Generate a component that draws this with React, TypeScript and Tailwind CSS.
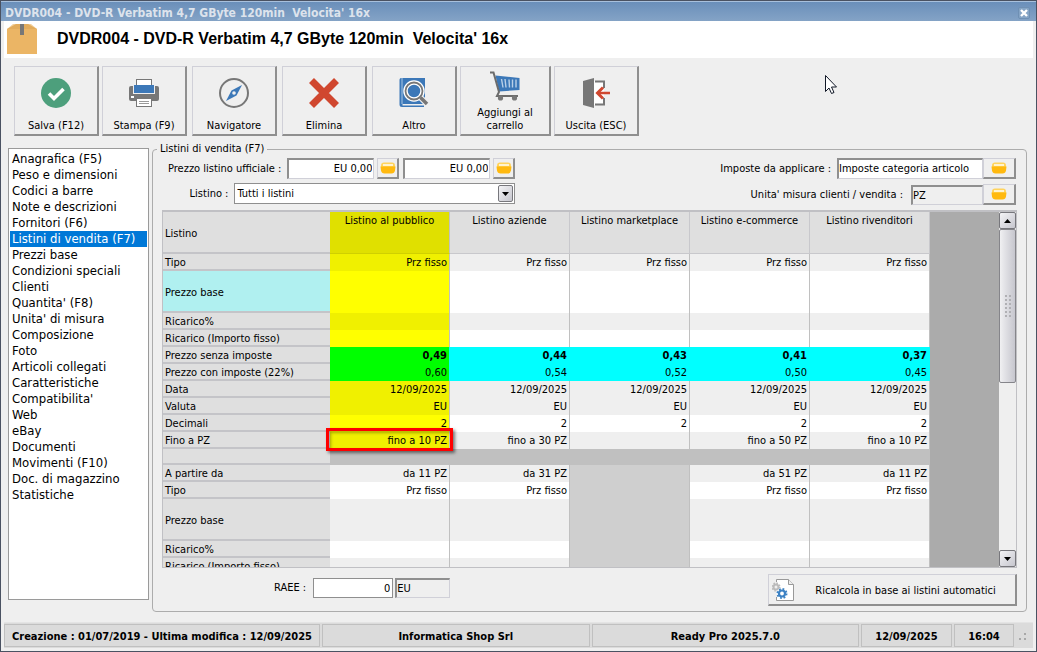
import type { ReactNode } from 'react';
import { clsx } from 'clsx';

const PRODUCT = "DVDR004 - DVD-R Verbatim 4,7 GByte 120min\u00a0 Velocita' 16x";

const SECTIONS = [
  'Anagrafica (F5)',
  'Peso e dimensioni',
  'Codici a barre',
  'Note e descrizioni',
  'Fornitori (F6)',
  'Listini di vendita (F7)',
  'Prezzi base',
  'Condizioni speciali',
  'Clienti',
  "Quantita' (F8)",
  "Unita' di misura",
  'Composizione',
  'Foto',
  'Articoli collegati',
  'Caratteristiche',
  "Compatibilita'",
  'Web',
  'eBay',
  'Documenti',
  'Movimenti (F10)',
  'Doc. di magazzino',
  'Statistiche',
];

const RAISED =
  'border border-t-[#d0d0d8] border-l-[#d0d0d8] border-r-2 border-b-2 border-r-[#8f8f8f] border-b-[#8f8f8f] bg-[#efefef]';
const SUNKEN =
  'border-t-2 border-l-2 border-r border-b border-t-[#8f8f8f] border-l-[#8f8f8f] border-r-[#d0d0d8] border-b-[#d0d0d8]';

function BoxIcon() {
  return (
    <svg width="30" height="30" viewBox="0 0 30 30">
      <path d="M6 0h18l6 5H0z" fill="#f2cf9b" />
      <path d="M9 0h12l9 5H0z" fill="#e2ac5c" />
      <rect y="5" width="30" height="25" fill="#ebb565" />
      <path d="M13 0h4v11h-4z" fill="#777" />
    </svg>
  );
}

function SaveIcon() {
  return (
    <svg width="30" height="30" viewBox="0 0 30 30">
      <circle cx="15" cy="15" r="15" fill="#4d9f7c" />
      <path d="M8 15.500l5 5L22.500 11" fill="none" stroke="#fff" strokeWidth="3.600" />
    </svg>
  );
}

function PrintIcon() {
  return (
    <svg width="30" height="30" viewBox="0 0 30 30">
      <rect x="7.500" y="1.500" width="15" height="9" fill="#fff" stroke="#777" />
      <path d="M2 8h26a2 2 0 0 1 2 2v11a2 2 0 0 1-2 2H2a2 2 0 0 1-2-2V10a2 2 0 0 1 2-2z" fill="#777" />
      <path d="M4 6h22v10H4z" fill="#efefef" />
      <rect x="7.500" y="1.500" width="15" height="9" fill="#fff" stroke="#777" />
      <rect x="5" y="7" width="20" height="8" fill="#3c78b8" />
      <rect x="2" y="18" width="3" height="2" fill="#fff" />
      <rect x="7.500" y="20.500" width="15" height="8" fill="#fff" stroke="#777" />
      <path d="M10 23.500h10M10 25.500h10" stroke="#999" />
    </svg>
  );
}

function CompassIcon() {
  return (
    <svg width="30" height="30" viewBox="0 0 30 30">
      <circle cx="15" cy="15" r="14" fill="none" stroke="#777" strokeWidth="2" />
      <path d="M23 7l-5.500 10.500L7 23l5.500-10.500z" fill="#3c78b8" />
      <circle cx="15" cy="15" r="1.800" fill="#efefef" />
    </svg>
  );
}

function DeleteIcon() {
  return (
    <svg width="30" height="30" viewBox="0 0 30 30">
      <path d="M2.500 2.500l25 25M27.500 2.500l-25 25" stroke="#d0472f" strokeWidth="7" />
    </svg>
  );
}

function SearchBookIcon() {
  return (
    <svg width="30" height="30" viewBox="0 0 30 30">
      <path d="M3 0h23v26H3.500v1.500H25V29H3a2.500 2.500 0 0 1-2.500-2.500V2A2 2 0 0 1 3 0z" fill="#3c78b8" />
      <path d="M3 0v26" stroke="#a9c7e5" />
      <path d="M21 19l7 7" stroke="#efefef" strokeWidth="6" />
      <circle cx="15" cy="13" r="8.500" fill="#3c78b8" stroke="#fff" strokeWidth="4.500" />
      <circle cx="15" cy="13" r="8.500" fill="none" stroke="#777" strokeWidth="1.800" />
      <path d="M21.500 19.500l6.500 6.500" stroke="#777" strokeWidth="3.600" />
    </svg>
  );
}

function CartIcon() {
  return (
    <svg width="30" height="30" viewBox="0 0 30 30">
      <path d="M5.500 4.500L29.500 7v12L9 20.500z" fill="#3c78b8" />
      <path d="M11.500 8l1.500 8.500M15 8l1 8.500M19 8.500l.5 8M22.500 8.500v8M26 8.500v8" stroke="#b9d0e8" strokeWidth="1.400" />
      <path d="M0 1.500h3.500L9 21 7 25h21" fill="none" stroke="#6c6c6c" strokeWidth="2" />
      <circle cx="10.500" cy="27" r="2.600" fill="#777" />
      <circle cx="24.500" cy="27" r="2.600" fill="#777" />
    </svg>
  );
}

function ExitIcon() {
  return (
    <svg width="30" height="30" viewBox="0 0 30 30">
      <path d="M2 3l11-3v30L2 27z" fill="#777" />
      <path d="M13 3h10v24H13z" fill="#fff" />
      <path d="M14 3.500h9V10M14 26.500h9V20" fill="none" stroke="#777" strokeWidth="2" />
      <path d="M29 15H17" stroke="#d0472f" strokeWidth="2.500" />
      <path d="M22 9.500L16.500 15l5.500 5.500" fill="none" stroke="#d0472f" strokeWidth="3" />
    </svg>
  );
}

function FolderIcon() {
  return (
    <svg width="16" height="12" viewBox="0 0 16 12">
      <path d="M1 3.500Q1 .5 4 .5h8q3 0 3 3V6H1z" fill="#ffd45e" />
      <path d="M3 2h10v2H3z" fill="#fff3cf" />
      <path d="M.5 4.500H15.500L15 8.500q-.5 3-3.500 3h-7q-3 0-3.500-3z" fill="#ffb90f" />
    </svg>
  );
}

function RecalcIcon() {
  return (
    <svg width="24" height="24" viewBox="0 0 24 24">
      <path d="M4.500 1.500h12l5 5v16h-17z" fill="#fff" stroke="#999" />
      <path d="M16.500 1.500v5h5" fill="#eee" stroke="#999" />
      <path d="M3 4h3v15H3z" fill="#efefef" />
      <circle cx="4" cy="9" r="2.500" fill="none" stroke="#bbb" strokeWidth="2" />
      <circle cx="4" cy="9" r="3.800" fill="none" stroke="#bbb" strokeWidth="1.500" strokeDasharray="1.500 1.480" />
      <circle cx="10" cy="15.500" r="5.500" fill="#fff" />
      <circle cx="10" cy="15.500" r="3" fill="#fff" stroke="#3c82c4" strokeWidth="2.200" />
      <circle cx="10" cy="15.500" r="4.600" fill="none" stroke="#3c82c4" strokeWidth="1.800" strokeDasharray="1.800 1.810" />
    </svg>
  );
}

function ToolButton({ icon, label, className }: { icon: ReactNode; label: string; className?: string }) {
  return (
    <button
      type="button"
      className={clsx('flex h-[70px] flex-col items-center justify-between pb-0.5 text-center leading-[13px]', RAISED, className ?? 'w-[85px] pt-[11px]')}
    >
      {icon}
      <span>{label}</span>
    </button>
  );
}

function FolderButton({ label, wide }: { label: string; wide?: boolean }) {
  return (
    <button
      type="button"
      aria-label={label}
      className={clsx('flex h-[21px] items-center justify-center', RAISED, wide ? 'w-[33px]' : 'w-[22px]')}
    >
      <FolderIcon />
    </button>
  );
}

type Row = {
  label: string;
  height: string;
  tone: string;
  highlight: string;
  values: string[];
  bold?: boolean;
  tier?: boolean;
  labelTone?: string;
};

const LISTS = ['Listino al pubblico', 'Listino aziende', 'Listino marketplace', 'Listino e-commerce', 'Listino rivenditori'];
const FIXED = Array<string>(5).fill('Prz fisso');
const NONE = Array<string>(5).fill('');
const LIGHT = 'bg-[#efefef]';
const DARK_YELLOW = 'bg-[#f0f000]';
const YELLOW = 'bg-[#ffff00]';
const CYAN = 'bg-[#00ffff]';
const GREEN = 'bg-[#00ff00]';

const ROWS: Row[] = [
  { label: 'Tipo', height: 'h-[17px]', tone: LIGHT, highlight: DARK_YELLOW, values: FIXED },
  { label: 'Prezzo base', height: 'h-[42px]', tone: 'bg-white', highlight: YELLOW, values: NONE, labelTone: 'bg-[#b0f0f0]' },
  { label: 'Ricarico%', height: 'h-[17px]', tone: LIGHT, highlight: DARK_YELLOW, values: NONE },
  { label: 'Ricarico (Importo fisso)', height: 'h-[17px]', tone: 'bg-white', highlight: YELLOW, values: NONE },
  { label: 'Prezzo senza imposte', height: 'h-[17px]', tone: CYAN, highlight: GREEN, values: ['0,49', '0,44', '0,43', '0,41', '0,37'], bold: true },
  { label: 'Prezzo con imposte (22%)', height: 'h-[17px]', tone: CYAN, highlight: GREEN, values: ['0,60', '0,54', '0,52', '0,50', '0,45'] },
  { label: 'Data', height: 'h-[17px]', tone: LIGHT, highlight: DARK_YELLOW, values: Array<string>(5).fill('12/09/2025') },
  { label: 'Valuta', height: 'h-[17px]', tone: LIGHT, highlight: DARK_YELLOW, values: Array<string>(5).fill('EU') },
  { label: 'Decimali', height: 'h-[17px]', tone: 'bg-white', highlight: YELLOW, values: Array<string>(5).fill('2') },
  { label: 'Fino a PZ', height: 'h-[17px]', tone: LIGHT, highlight: DARK_YELLOW, values: ['fino a 10 PZ', 'fino a 30 PZ', '', 'fino a 50 PZ', 'fino a 10 PZ'] },
  { label: '', height: 'h-4', tone: 'bg-[#c0c0c0]', highlight: 'bg-[#c0c0c0]', values: NONE },
  { label: 'A partire da', height: 'h-[17px]', tone: LIGHT, highlight: LIGHT, values: ['da 11 PZ', 'da 31 PZ', '', 'da 51 PZ', 'da 11 PZ'], tier: true },
  { label: 'Tipo', height: 'h-[17px]', tone: 'bg-white', highlight: 'bg-white', values: ['Prz fisso', 'Prz fisso', '', 'Prz fisso', 'Prz fisso'], tier: true },
  { label: 'Prezzo base', height: 'h-[42px]', tone: LIGHT, highlight: LIGHT, values: NONE, tier: true },
  { label: 'Ricarico%', height: 'h-[17px]', tone: 'bg-white', highlight: 'bg-white', values: NONE, tier: true },
  { label: 'Ricarico (Importo fisso)', height: 'h-[17px]', tone: LIGHT, highlight: LIGHT, values: NONE, tier: true },
];

function PriceTable() {
  return (
    <table className="w-[767px] shrink-0 table-fixed border-separate border-spacing-0 self-start leading-[13px]">
      <colgroup>
        <col className="w-[167px]" />
        {LISTS.map((name) => (
          <col key={name} className="w-[120px]" />
        ))}
      </colgroup>
      <thead>
        <tr className="h-[42px]">
          <th scope="col" className="border-b-2 border-[#c4c4c8] bg-[#dfdfdf] p-0 pt-0.5 pl-0.5 text-left font-normal">
            Listino
          </th>
          {LISTS.map((name, i) => (
            <th
              key={name}
              scope="col"
              className={clsx(
                'border-r border-b p-0 pt-0.5 align-top font-normal',
                i === 0 ? 'border-[#d0d000] border-r-[#c0c0c0] bg-[#e0e000]' : 'border-[#c8c8cc] bg-[#dfdfdf]',
              )}
            >
              {name}
            </th>
          ))}
        </tr>
      </thead>
      <tbody>
        {ROWS.map((row, r) => (
          <tr key={r} className={row.height}>
            <th
              scope="row"
              className={clsx('border-b-2 border-[#c4c4c8] p-0 pt-0.5 pl-0.5 text-left font-normal', row.labelTone ?? 'bg-[#dfdfdf]')}
            >
              {row.label}
            </th>
            {row.values.map((value, c) => (
              <td
                key={c}
                className={clsx(
                  'relative border-r p-0 pr-0.5 text-right',
                  row.tier && c === 2 ? 'bg-[#cfcfcf]' : c === 0 ? row.highlight : row.tone,
                  row.tone === CYAN ? 'border-[#00ffff]' : 'border-[#c0c0c0]',
                  row.bold && 'font-bold',
                )}
              >
                {value}
                {row.label === 'Fino a PZ' && c === 0 && (
                  <span className="absolute -top-1 -right-1 -bottom-0.5 -left-1 z-10 border-[3px] border-[#ff0000] shadow-[2px_2px_3px_rgba(0,0,0,0.5),inset_2px_2px_3px_rgba(0,0,0,0.3)]" />
                )}
              </td>
            ))}
          </tr>
        ))}
      </tbody>
    </table>
  );
}

function ArrowButton({ up }: { up?: boolean }) {
  return (
    <button
      type="button"
      aria-label={up ? 'Scorri su' : 'Scorri giù'}
      className="flex h-[17px] w-full shrink-0 items-center justify-center rounded-xs border border-[#77777c] bg-linear-to-br from-[#f4f4f6] to-[#c6c6ce]"
    >
      <svg width="7" height="4" viewBox="0 0 7 4">
        <path d={up ? 'M0 4l3.500-4L7 4z' : 'M0 0h7L3.500 4z'} />
      </svg>
    </button>
  );
}

function ScrollBar() {
  return (
    <div className="flex w-[17px] shrink-0 flex-col bg-[#efefef]">
      <ArrowButton up />
      <div className="flex h-[154px] items-center justify-center rounded-xs border border-[#85858a] bg-linear-to-r from-[#f0f0f2] to-[#c6c6ce]">
        <div className="grid grid-cols-2 gap-[2px]">
          {Array.from({ length: 12 }, (_, i) => (
            <span key={i} className="size-[2px] bg-[#b0b0b4]" />
          ))}
        </div>
      </div>
      <div className="flex-1" />
      <ArrowButton />
    </div>
  );
}

function StatusCell({ children, className }: { children: ReactNode; className: string }) {
  return (
    <div className={clsx('flex h-[23px] items-center justify-center border border-[#c0c0c0] pt-0.5 whitespace-nowrap', className)}>
      {children}
    </div>
  );
}

export default function App() {
  return (
    <div className="relative flex h-screen min-h-[640px] flex-col border border-[#4a5262] bg-[#efefef] font-['DejaVu_Sans_Condensed','DejaVu_Sans',sans-serif] text-[11px] leading-[14px] text-black">
      <header className="flex h-5 shrink-0 items-center justify-between border-t border-[#a8c0dc] bg-linear-to-b from-[#6a8fba] to-[#84a3c6] pt-0.5 pr-1.5 pl-1 text-[12px] font-bold text-[#dde3ec]">
        <span>{PRODUCT}</span>
        <button
          type="button"
          aria-label="Chiudi"
          className="flex h-3 w-3 items-center justify-center rounded-xs border border-[#6f90b4] bg-[#86a5c6]"
        >
          <svg width="8" height="8" viewBox="0 0 8 8">
            <path d="M1 1l6 6M7 1L1 7" stroke="#fff" strokeWidth="2.400" />
          </svg>
        </button>
      </header>

      <div className="mr-[3px] ml-[3px] flex h-[37px] shrink-0 items-start gap-5 bg-white pt-[3px] pl-[3px]">
        <BoxIcon />
        <h1 className="pt-[5px] font-['Liberation_Sans',Arial,sans-serif] text-[16px] leading-5 font-bold">{PRODUCT}</h1>
      </div>

      <nav aria-label="Comandi" className="mt-2 ml-[13px] flex shrink-0 gap-[3px]">
        <ToolButton icon={<SaveIcon />} label="Salva (F12)" />
        <div className="flex gap-[5px]">
          <ToolButton icon={<PrintIcon />} label="Stampa (F9)" />
          <ToolButton icon={<CompassIcon />} label="Navigatore" />
          <ToolButton icon={<DeleteIcon />} label="Elimina" />
          <ToolButton icon={<SearchBookIcon />} label="Altro" />
        </div>
        <ToolButton icon={<CartIcon />} label="Aggiungi al carrello" className="w-[91px] px-3 pt-1" />
        <ToolButton icon={<ExitIcon />} label="Uscita (ESC)" />
      </nav>

      <main className="mt-1.5 flex min-h-0 flex-1 gap-[3px] pr-[9px] pl-[7px]">
        <ul className="mt-1.5 mb-3 w-[141px] shrink-0 overflow-hidden border border-[#9a9a9a] bg-white px-px py-0.5 text-[13px] leading-4">
          {SECTIONS.map((name, i) => (
            <li key={name}>
              <a
                href={`#sezione-${i}`}
                className={clsx('block pl-0.5 whitespace-nowrap', i === 5 && 'bg-[#0078d7] text-white')}
              >
                {name}
              </a>
            </li>
          ))}
        </ul>

        <fieldset className="flex min-w-0 flex-1 flex-col rounded border border-[#acacac] pr-[9px] pl-[9px]">
          <legend className="-ml-[5px] px-[3px]">Listini di vendita (F7)</legend>

          <div className="flex items-start justify-between">
            <div className="flex flex-col items-end gap-1 pt-0.5 pl-1.5">
              <div className="flex h-[21px] items-center">
                <label htmlFor="ufficiale" className="mr-1.5">
                  Prezzo listino ufficiale :
                </label>
                <input id="ufficiale" defaultValue="EU 0,00" className={clsx('h-[21px] w-[87px] bg-white pr-px pb-0.5 text-right', SUNKEN)} />
                <span className="ml-[3px]">
                  <FolderButton label="Scegli valuta" />
                </span>
                <input aria-label="Secondo prezzo ufficiale" defaultValue="EU 0,00" className={clsx('ml-1 h-[21px] w-[87px] bg-white pr-px pb-0.5 text-right', SUNKEN)} />
                <span className="ml-[3px]">
                  <FolderButton label="Scegli seconda valuta" />
                </span>
              </div>
              <div className="flex items-center">
                <label htmlFor="listino" className="mr-1.5">
                  Listino :
                </label>
                <div className="relative">
                  <select id="listino" className="h-[21px] w-[281px] appearance-none border border-[#8f8f8f] bg-white pl-0.5">
                    <option>Tutti i listini</option>
                  </select>
                  <span className="pointer-events-none absolute top-0.5 right-0.5 flex h-[17px] w-[15px] items-center justify-center rounded-xs border border-[#77777c] bg-linear-to-br from-[#f4f4f6] to-[#c6c6ce]">
                    <svg width="7" height="4" viewBox="0 0 7 4">
                      <path d="M0 0h7L3.500 4z" />
                    </svg>
                  </span>
                </div>
              </div>
            </div>

            <div className="flex flex-col items-end gap-[5px] pt-0.5 pr-px">
              <div className="flex items-center">
                <label htmlFor="imposte" className="mr-1.5">
                  Imposte da applicare :
                </label>
                <input id="imposte" defaultValue="Imposte categoria articolo" className={clsx('h-[21px] w-[146px] bg-white pb-0.5', SUNKEN)} />
                <FolderButton label="Scegli imposte" wide />
              </div>
              <div className="flex items-center">
                <label htmlFor="unita" className="mr-2">
                  Unita' misura clienti / vendita :
                </label>
                <input id="unita" defaultValue="PZ" className={clsx('h-5 w-[72px] bg-[#efefef]', SUNKEN)} />
                <FolderButton label="Scegli unità" wide />
              </div>
            </div>
          </div>

          <div className="mt-[5px] flex min-h-0 flex-1 overflow-hidden border border-t-2 border-[#c0c0c4] bg-[#ababab]">
            <PriceTable />
            <div className="flex-1" />
            <ScrollBar />
          </div>

          <div className="mt-1.5 mb-[5px] flex h-8 shrink-0 items-start justify-between">
            <div className="flex items-center pt-1 pl-[112px]">
              <label htmlFor="raee" className="mr-[7px]">
                RAEE :
              </label>
              <input id="raee" defaultValue="0" className="h-5 w-20 border border-[#8f8f8f] bg-white pr-0.5 text-right" />
              <input aria-label="Valuta RAEE" defaultValue="EU" className={clsx('ml-[2px] h-5 w-[55px] bg-[#efefef]', SUNKEN)} />
            </div>
            <button type="button" className={clsx('flex h-8 w-[249px] items-center pl-[3px]', RAISED)}>
              <RecalcIcon />
              <span className="flex-1 pt-0.5 text-center">Ricalcola in base ai listini automatici</span>
            </button>
          </div>
        </fieldset>
      </main>

      <footer className="mt-2.5 mr-[3px] mb-[3px] ml-[3px] flex h-[26px] shrink-0 items-center gap-[2px] border-t border-[#e4e4e4] bg-[#dbdbdb] font-bold">
        <StatusCell className="w-[316px]">Creazione : 01/07/2019 - Ultima modifica : 12/09/2025</StatusCell>
        <StatusCell className="flex-1">Informatica Shop Srl</StatusCell>
        <StatusCell className="flex-1">Ready Pro 2025.7.0</StatusCell>
        <StatusCell className="w-[91px]">12/09/2025</StatusCell>
        <StatusCell className="w-[60px]">16:04</StatusCell>
        <svg width="17" height="16" viewBox="0 0 17 16">
          <path d="M8 5h2v2H8zM8 10h2v2H8zM3 10h2v2H3z" fill="#a8a8a8" />
        </svg>
      </footer>

      <svg className="pointer-events-none absolute top-[74px] left-[824px]" width="13" height="20" viewBox="0 0 13 20">
        <path d="M.5.5v16l3.500-3.500 2.500 5.500 2.500-1-2.500-5.500h5z" fill="#fff" stroke="#111827" />
      </svg>
    </div>
  );
}
